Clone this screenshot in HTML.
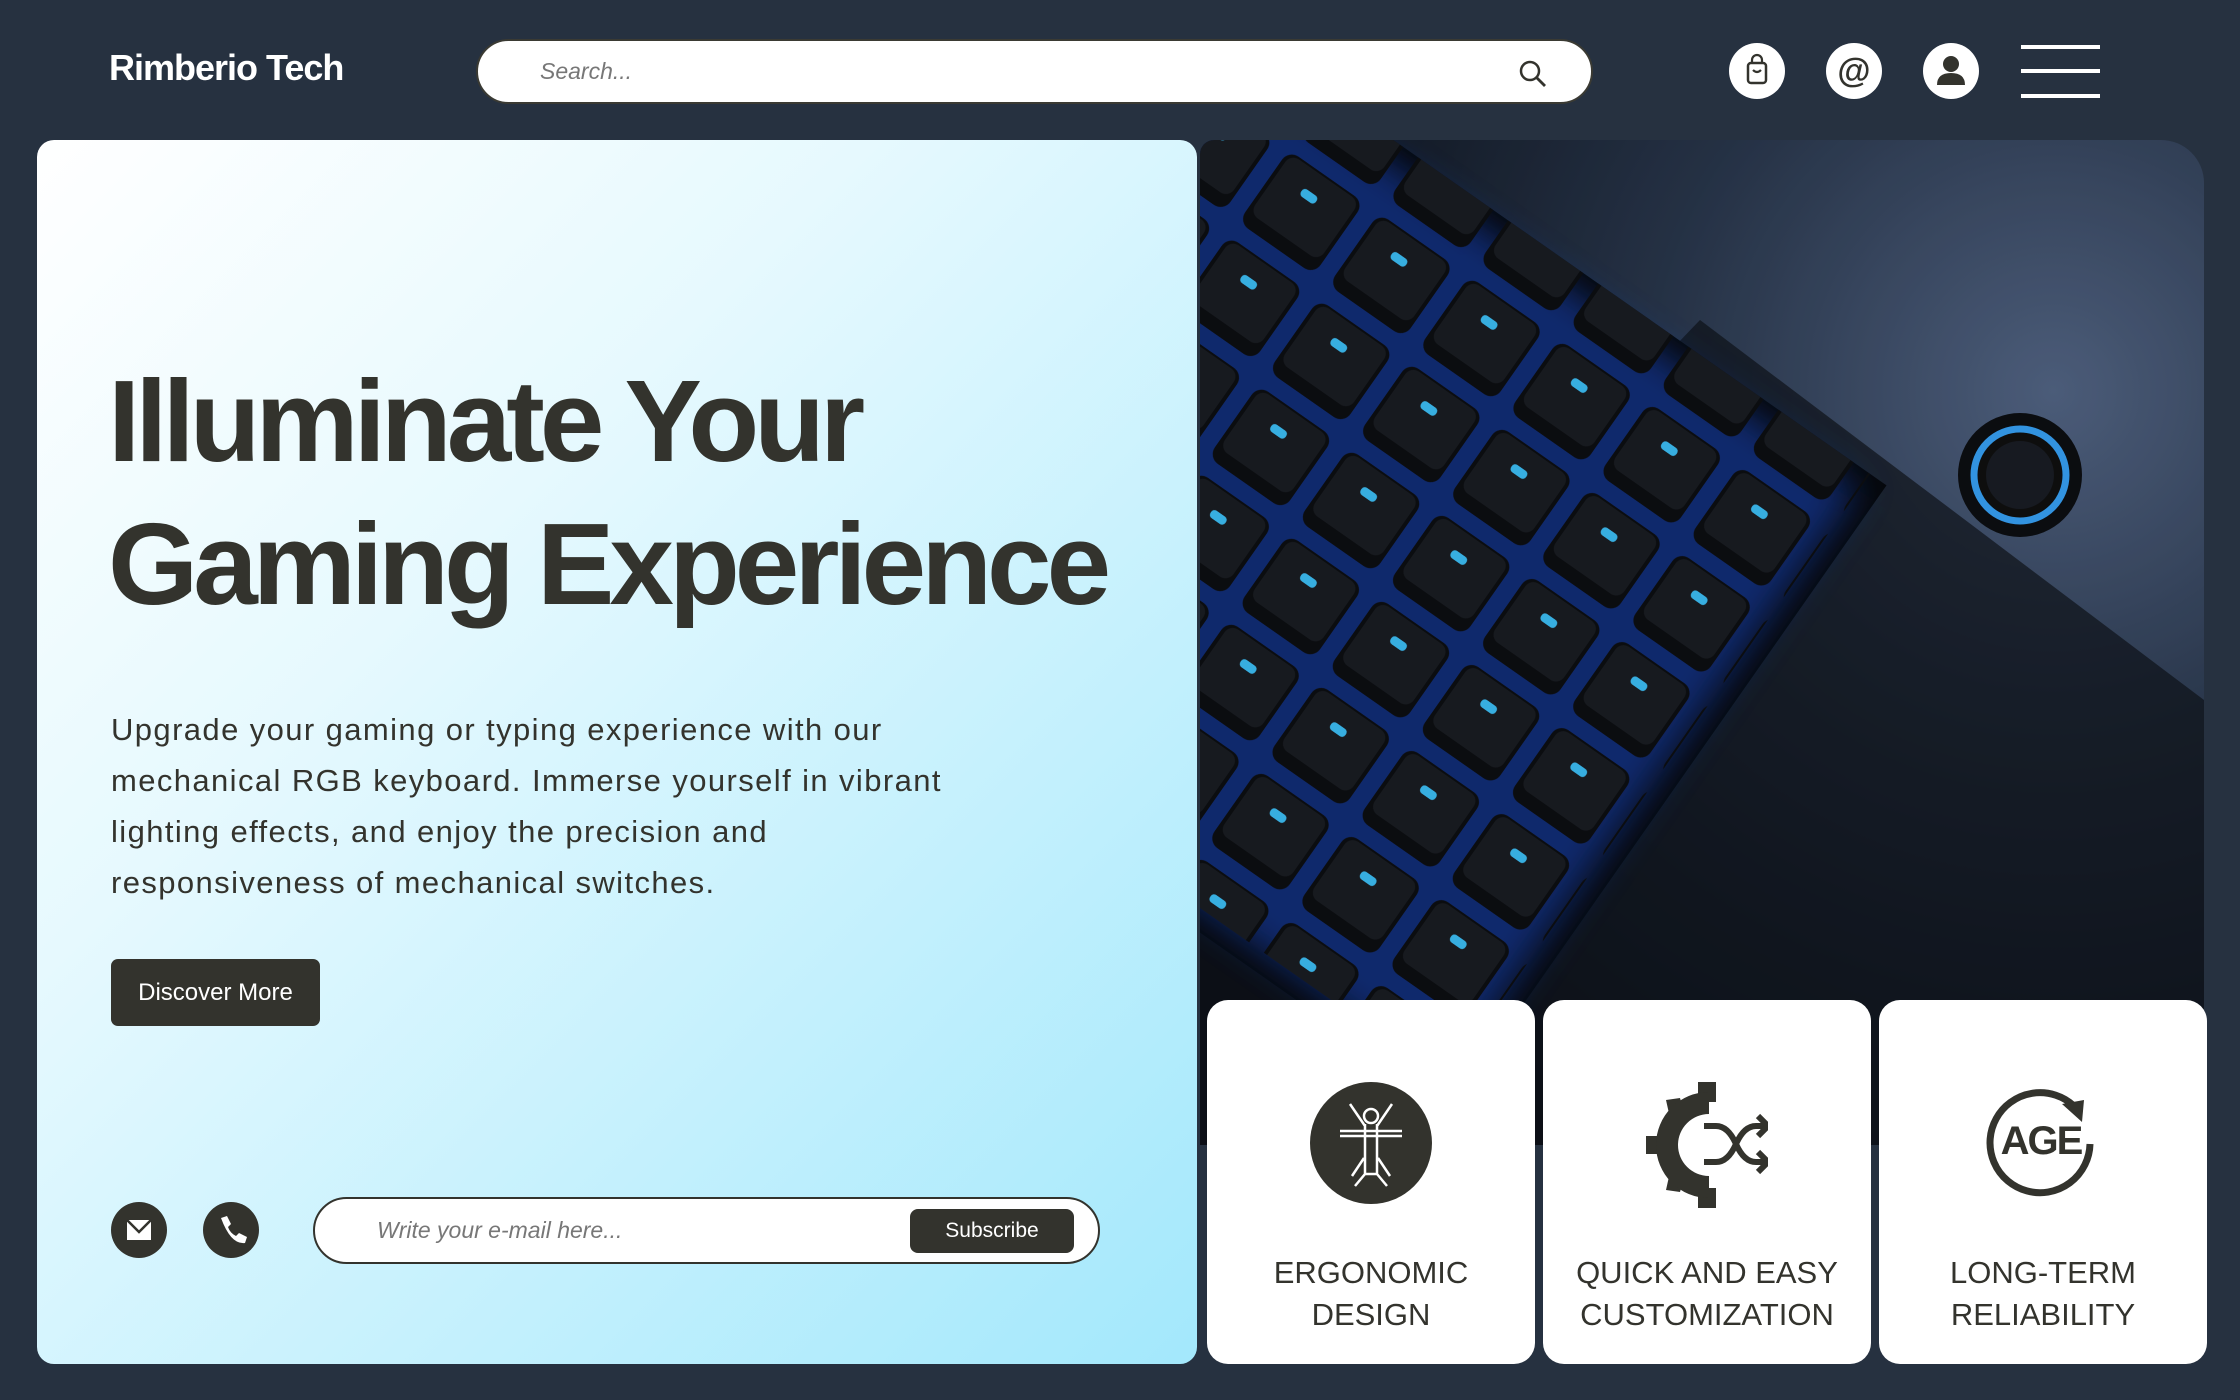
<!DOCTYPE html>
<html><head><meta charset="utf-8"><style>
*{margin:0;padding:0;box-sizing:border-box}
body{width:2240px;height:1400px;background:#263140;font-family:"Liberation Sans",sans-serif;position:relative;overflow:hidden;color:#33332d}
.abs{position:absolute}
.logo{left:109px;top:47px;font-size:36px;font-weight:bold;color:#fff;letter-spacing:-1px}
.search{left:476px;top:39px;width:1117px;height:65px;background:#fff;border:2px solid #3a3a33;border-radius:33px}
.search span{position:absolute;left:62px;top:17px;font-size:23px;font-style:italic;color:#777}
.ic{width:56px;height:56px;border-radius:50%;background:#fff;top:43px}
.ham{left:2021px;width:79px;height:4px;background:#fff}
.left{left:37px;top:140px;width:1160px;height:1224px;border-radius:17px;background:linear-gradient(135deg,#fff 0%,#e6f9fe 35%,#a3e8fc 100%)}
h1{position:absolute;left:108px;top:350px;font-size:116px;line-height:143px;font-weight:bold;letter-spacing:-5px;color:#33332d;white-space:nowrap}
.p{left:111px;top:704px;width:1000px;font-size:31px;line-height:51px;color:#33332d;letter-spacing:1.4px;white-space:nowrap}
.btn{left:111px;top:959px;width:209px;height:67px;background:#33332d;border-radius:7px;color:#fff;font-size:24px;text-align:center;line-height:67px}
.circ{width:56px;height:56px;border-radius:50%;background:#33332d;top:1202px}
.sub{left:313px;top:1197px;width:787px;height:67px;border:2px solid #33332d;border-radius:34px;background:#fff}
.sub span{position:absolute;left:62px;top:18px;font-size:23px;font-style:italic;color:#777}
.sub b{position:absolute;left:595px;top:10px;width:164px;height:44px;background:#33332d;border-radius:8px;color:#fff;font-weight:normal;font-size:21px;text-align:center;line-height:44px}
.img{left:1200px;top:140px;width:1004px;height:1005px;border-radius:14px 43px 0 0;overflow:hidden}
.card{top:1000px;height:364px;width:328px;background:#fff;border-radius:21px;text-align:center}
.card .t{position:absolute;left:0;right:0;top:252px;font-size:31px;line-height:42px;color:#33332d}
.card svg{position:absolute;left:103px;top:82px}
</style></head><body>
<div class="abs logo">Rimberio Tech</div>
<div class="abs search"><span>Search...</span>
<svg class="abs" style="left:1040px;top:18px" width="30" height="30" viewBox="0 0 30 30"><circle cx="12" cy="12" r="9" fill="none" stroke="#33332d" stroke-width="2.5"/><path d="M19 19L27 27" stroke="#33332d" stroke-width="2.8"/></svg></div>
<div class="abs ic" style="left:1729px"><svg width="56" height="56" viewBox="0 0 56 56"><rect x="19" y="20" width="18" height="20" rx="3" fill="none" stroke="#33332d" stroke-width="2.5"/><path d="M23 20v-3a5 5 0 0 1 10 0v3M24 27q4 4 8 0" fill="none" stroke="#33332d" stroke-width="2.2"/></svg></div>
<div class="abs ic" style="left:1826px"><svg width="56" height="56" viewBox="0 0 56 56"><text x="28" y="39" text-anchor="middle" font-size="34" font-weight="bold" fill="#33332d" font-family="Liberation Sans">@</text></svg></div>
<div class="abs ic" style="left:1923px"><svg width="56" height="56" viewBox="0 0 56 56"><circle cx="28" cy="21" r="8" fill="#33332d"/><path d="M14 42q0-12 14-12t14 12z" fill="#33332d"/></svg></div>
<div class="abs ham" style="top:45px"></div><div class="abs ham" style="top:69px"></div><div class="abs ham" style="top:94px"></div>

<div class="abs left"></div>
<h1>Illuminate Your<br>Gaming Experience</h1>
<div class="abs p">Upgrade your gaming or typing experience with our<br>mechanical RGB keyboard. Immerse yourself in vibrant<br>lighting effects, and enjoy the precision and<br>responsiveness of mechanical switches.</div>
<div class="abs btn">Discover More</div>
<div class="abs circ" style="left:111px"><svg width="56" height="56" viewBox="0 0 56 56"><rect x="16" y="18" width="24" height="20" fill="#fff"/><path d="M16 18l12 12 12-12" fill="none" stroke="#33332d" stroke-width="2.5"/></svg></div>
<div class="abs circ" style="left:203px"><svg width="56" height="56" viewBox="0 0 56 56"><path d="M18 16l6-2 4 8-3 3q2 6 8 9l3-3 8 4-2 6q-14 2-24-25z" fill="#fff"/></svg></div>
<div class="abs sub"><span>Write your e-mail here...</span><b>Subscribe</b></div>

<div class="abs img"><svg width="1004" height="1005" viewBox="0 0 1004 1005">
<defs>
<radialGradient id="bg" cx="0.85" cy="0.25" r="0.9"><stop offset="0" stop-color="#56698a"/><stop offset="0.45" stop-color="#2a384e"/><stop offset="1" stop-color="#0a0f18"/></radialGradient>
<filter id="gl"><feGaussianBlur stdDeviation="18"/></filter>
<pattern id="keys" width="110" height="105" patternUnits="userSpaceOnUse"><rect x="8" y="8" width="92" height="88" rx="12" fill="#0d0f13"/><rect x="12" y="10" width="84" height="72" rx="10" fill="#1b1e24"/><rect x="42" y="30" width="18" height="9" rx="4" fill="#3fc6ff"/></pattern>
</defs>
<rect width="1004" height="1005" fill="url(#bg)"/>
<path d="M0 1005 L0 700 L500 180 L1004 560 L1004 1005 Z" fill="#10141b" opacity="0.7"/>
<g transform="translate(-260,-40) rotate(35 500 500)">
<rect x="-50" y="150" width="850" height="760" fill="#07090c"/>
<rect x="-30" y="170" width="810" height="720" fill="#1a4fd8" filter="url(#gl)" opacity="0.55"/>
<rect x="-50" y="150" width="830" height="740" fill="url(#keys)"/>
</g>
<circle cx="820" cy="335" r="62" fill="#0d0f13"/>
<circle cx="820" cy="335" r="46" fill="#111" stroke="#3aa8ff" stroke-width="7"/>
<circle cx="820" cy="335" r="34" fill="#1b1e26"/>
<rect width="1004" height="1005" fill="#000" opacity="0.12"/>
</svg></div>

<div class="abs card" style="left:1207px">
<svg width="122" height="122" viewBox="0 0 122 122"><circle cx="61" cy="61" r="61" fill="#33332d"/><g fill="none" stroke="#fff" stroke-width="2.5"><circle cx="61" cy="34" r="7"/><path d="M30 49h62M30 54h62M55 42v50h12V42M55 92l-10 12M67 92l10 12M55 44L40 22M67 44l15-22M54 76l-12 18M68 76l12 18"/></g></svg>
<div class="t">ERGONOMIC<br>DESIGN</div></div>
<div class="abs card" style="left:1543px">
<svg width="122" height="126" viewBox="0 0 122 126"><g fill="#33332d"><rect x="52" y="0" width="18" height="20"/><rect x="52" y="106" width="18" height="20"/><rect x="0" y="54" width="14" height="18"/><path d="M20 18l14-2 4 14-14 6zM20 108l14 2 4-14-14-6z"/><path d="M63 10a53 53 0 1 0 0 106v-22a31 31 0 1 1 0-62z"/></g><g fill="none" stroke="#33332d" stroke-width="6"><path d="M58 44h12q12 0 20 18t20 18h12M58 80h12q12 0 20-18t20-18h12"/><path d="M112 34l10 10-10 10M112 70l10 10-10 10"/></g></svg>
<div class="t">QUICK AND EASY<br>CUSTOMIZATION</div></div>
<div class="abs card" style="left:1879px">
<svg width="122" height="122" viewBox="0 0 122 122"><path d="M108 62A50 50 0 1 1 92 24" fill="none" stroke="#33332d" stroke-width="7"/><path d="M80 22l22-4-2 22z" fill="#33332d"/><text x="59" y="72" text-anchor="middle" font-size="40" font-weight="bold" fill="#33332d" font-family="Liberation Sans" letter-spacing="-2">AGE</text></svg>
<div class="t">LONG-TERM<br>RELIABILITY</div></div>
</body></html>
